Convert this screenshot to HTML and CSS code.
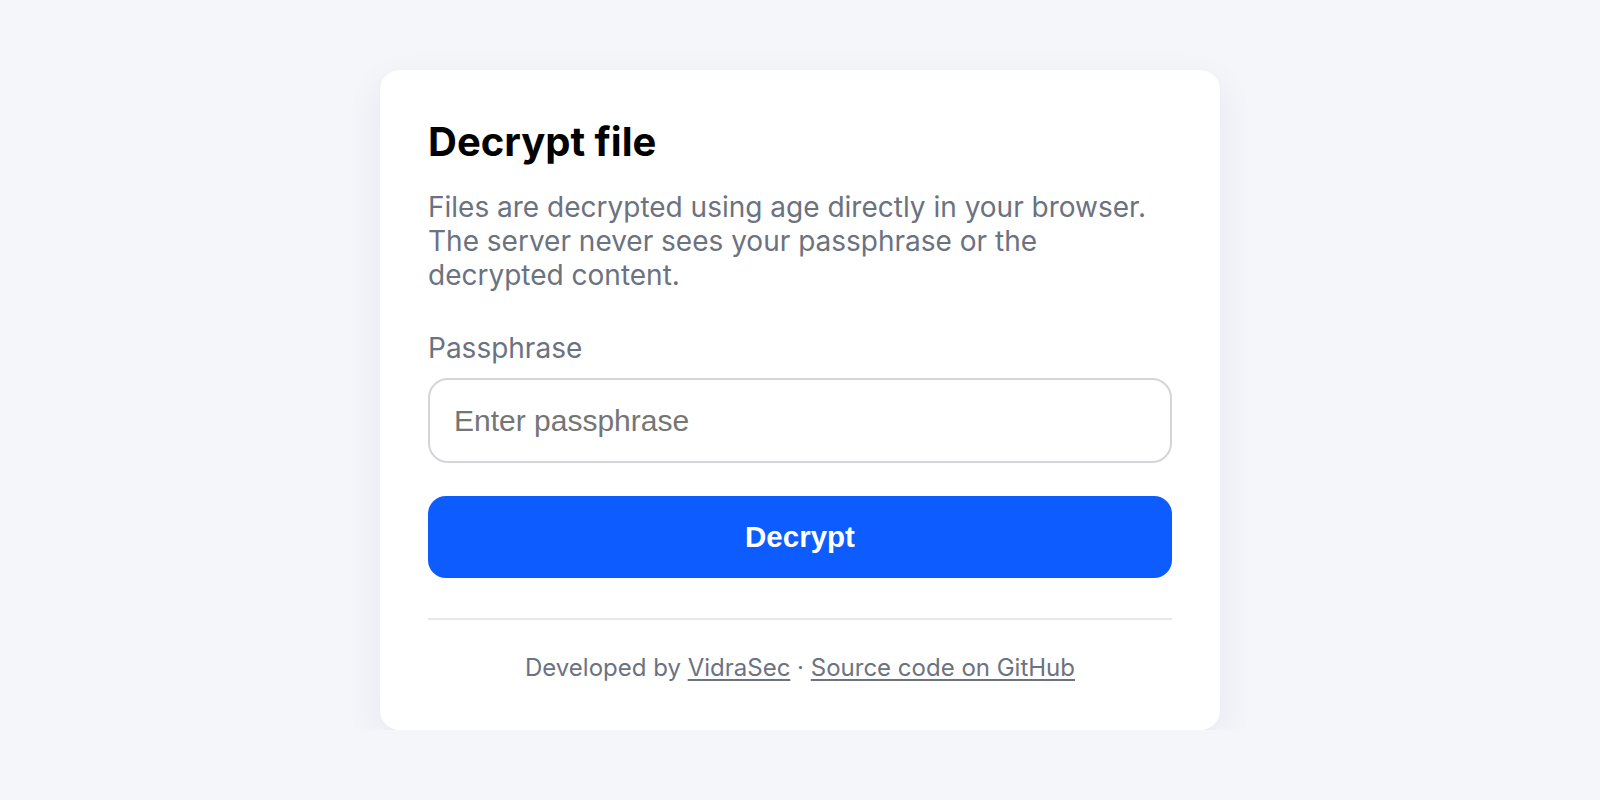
FILE: index.html
```html
<!DOCTYPE html>
<html lang="en">
<head>
<meta charset="utf-8">
<title>Decrypt file</title>
<link rel="stylesheet" href="styles.css">
</head>
<body>
<main class="page">
  <section class="card">
    <h1 class="title">Decrypt file</h1>
    <p class="lead">Files are decrypted using age directly in your browser. The server never sees your passphrase or the decrypted content.</p>
    <form class="form">
      <label class="label" for="pass">Passphrase</label>
      <input class="input" id="pass" type="password" placeholder="Enter passphrase">
      <button class="button" type="button">Decrypt</button>
    </form>
    <hr class="divider">
    <footer class="footer">Developed by <a href="#">VidraSec</a> · <a href="#">Source code on GitHub</a></footer>
  </section>
</main>
</body>
</html>
```

FILE: styles.css
```css
* { box-sizing: border-box; }
html, body {
  margin: 0;
  padding: 0;
  background: #f5f6fa;
  font-family: Inter, "Noto Sans", sans-serif;
}
.page {
  display: flex;
  justify-content: center;
  padding-top: 70px;
}
.card {
  width: 840px;
  background: #ffffff;
  border-radius: 20px;
  padding: 48px 48px 47px;
  box-shadow: 0 12px 36px rgba(30, 40, 80, 0.07);
}
.title {
  margin: 0;
  font-size: 40px;
  line-height: 48px;
  font-weight: 700;
  color: #000000;
}
.lead {
  margin: 24px 0 0;
  font-size: 28px;
  line-height: 34px;
  color: #6b7280;
}
.form {
  display: flex;
  flex-direction: column;
  margin-top: 39px;
}
.label {
  font-size: 28px;
  line-height: 34px;
  color: #6b7280;
}
.input {
  margin-top: 13px;
  height: 85px;
  padding: 0 24px;
  border: 2px solid #d4d5d9;
  border-radius: 20px;
  font-family: "Liberation Sans", Arial, sans-serif;
  font-size: 30px;
  color: #111;
  background: #fff;
  outline: none;
}
.input::placeholder { color: #757575; }
.button {
  margin-top: 33px;
  height: 82px;
  border: 0;
  border-radius: 18px;
  background: #0d5cff;
  color: #ffffff;
  font-family: "Liberation Sans", Arial, sans-serif;
  font-size: 29.5px;
  font-weight: 700;
  cursor: pointer;
}
.divider {
  margin: 40px 0 0;
  border: 0;
  height: 2px;
  background: #e5e7eb;
}
.footer {
  margin-top: 33px;
  text-align: center;
  font-size: 24px;
  line-height: 30px;
  color: #6b7280;
}
.footer a {
  color: #6b7280;
  text-decoration: underline;
  text-underline-offset: 3px;
}
```
